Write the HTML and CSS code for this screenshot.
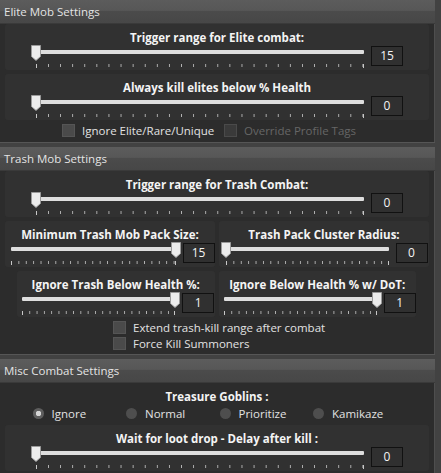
FILE: index.html
```html
<!DOCTYPE html>
<html lang="en">
<head>
    <meta charset="UTF-8">
    <title>Combat Settings</title>
    <link rel="stylesheet" href="styles.css">
</head>
<body>
    <div class="section">
        <div class="section-head">Elite Mob Settings</div>
        <div class="section-body">
            <div class="panel">
                <div class="label">Trigger range for Elite combat:</div>
                <div class="slider-row">
                    <div class="slider full">
                        <div class="track"></div>
                        <svg class="thumb" width="10" height="16"><path d="M0.5 0.5H9.5V11.5L5 15.5L0.5 11.5Z" fill="#ececec" stroke="#9a9a9a"/></svg>
                        <div class="ticks"></div>
                    </div>
                    <div class="value">15</div>
                </div>
            </div>
            <div class="panel">
                <div class="label">Always kill elites below % Health</div>
                <div class="slider-row">
                    <div class="slider full">
                        <div class="track"></div>
                        <svg class="thumb" width="10" height="16"><path d="M0.5 0.5H9.5V11.5L5 15.5L0.5 11.5Z" fill="#ececec" stroke="#9a9a9a"/></svg>
                        <div class="ticks"></div>
                    </div>
                    <div class="value">0</div>
                </div>
            </div>
            <div class="check-row">
                <label class="check"><span class="box"></span>Ignore Elite/Rare/Unique</label>
                <label class="check disabled"><span class="box"></span>Override Profile Tags</label>
            </div>
        </div>
    </div>

    <div class="section">
        <div class="section-head">Trash Mob Settings</div>
        <div class="section-body">
            <div class="panel">
                <div class="label">Trigger range for Trash Combat:</div>
                <div class="slider-row">
                    <div class="slider full">
                        <div class="track"></div>
                        <svg class="thumb" width="10" height="16"><path d="M0.5 0.5H9.5V11.5L5 15.5L0.5 11.5Z" fill="#ececec" stroke="#9a9a9a"/></svg>
                        <div class="ticks"></div>
                    </div>
                    <div class="value">0</div>
                </div>
            </div>
            <div class="pair">
                <div class="panel">
                    <div class="label">Minimum Trash Mob Pack Size:</div>
                    <div class="slider-row">
                        <div class="slider half">
                            <div class="track"></div>
                            <svg class="thumb max" width="10" height="16"><path d="M0.5 0.5H9.5V11.5L5 15.5L0.5 11.5Z" fill="#ececec" stroke="#9a9a9a"/></svg>
                            <div class="ticks"></div>
                        </div>
                        <div class="value">15</div>
                    </div>
                </div>
                <div class="panel">
                    <div class="label">Trash Pack Cluster Radius:</div>
                    <div class="slider-row">
                        <div class="slider half-r">
                            <div class="track"></div>
                            <svg class="thumb" width="10" height="16"><path d="M0.5 0.5H9.5V11.5L5 15.5L0.5 11.5Z" fill="#ececec" stroke="#9a9a9a"/></svg>
                            <div class="ticks"></div>
                        </div>
                        <div class="value">0</div>
                    </div>
                </div>
            </div>
            <div class="pair inset">
                <div class="panel">
                    <div class="label">Ignore Trash Below Health %:</div>
                    <div class="slider-row">
                        <div class="slider short">
                            <div class="track"></div>
                            <svg class="thumb max" width="10" height="16"><path d="M0.5 0.5H9.5V11.5L5 15.5L0.5 11.5Z" fill="#ececec" stroke="#9a9a9a"/></svg>
                            <div class="ticks"></div>
                        </div>
                        <div class="value">1</div>
                    </div>
                </div>
                <div class="panel">
                    <div class="label">Ignore Below Health % w/ DoT:</div>
                    <div class="slider-row">
                        <div class="slider short">
                            <div class="track"></div>
                            <svg class="thumb max" width="10" height="16"><path d="M0.5 0.5H9.5V11.5L5 15.5L0.5 11.5Z" fill="#ececec" stroke="#9a9a9a"/></svg>
                            <div class="ticks"></div>
                        </div>
                        <div class="value">1</div>
                    </div>
                </div>
            </div>
            <div class="check-list">
                <label class="check"><span class="box"></span>Extend trash-kill range after combat</label>
                <label class="check"><span class="box"></span>Force Kill Summoners</label>
            </div>
        </div>
    </div>

    <div class="section">
        <div class="section-head">Misc Combat Settings</div>
        <div class="section-body">
            <div class="label goblins">Treasure Goblins :</div>
            <div class="radio-row">
                <label class="radio checked"><span class="dot"></span>Ignore</label>
                <label class="radio"><span class="dot"></span>Normal</label>
                <label class="radio"><span class="dot"></span>Prioritize</label>
                <label class="radio"><span class="dot"></span>Kamikaze</label>
            </div>
            <div class="panel">
                <div class="label">Wait for loot drop - Delay after kill :</div>
                <div class="slider-row">
                    <div class="slider full">
                        <div class="track"></div>
                        <svg class="thumb" width="10" height="16"><path d="M0.5 0.5H9.5V11.5L5 15.5L0.5 11.5Z" fill="#ececec" stroke="#9a9a9a"/></svg>
                        <div class="ticks"></div>
                    </div>
                    <div class="value">0</div>
                </div>
            </div>
        </div>
    </div>
</body>
</html>
```

FILE: styles.css
```css
body {
    margin: 0;
    background: #424242;
    font-family: "Open Sans", "Noto Sans", sans-serif;
    font-size: 11.5px;
    color: #ececec;
    overflow: hidden;
}
.section {
    width: 435px;
    margin-bottom: 4px;
    border-bottom: 1px solid #565656;
}
.section-head {
    height: 23px;
    line-height: 23px;
    padding-left: 4px;
    font-size: 11.5px;
    color: #e4e4e4;
    background: linear-gradient(#5c5c5c 0%, #575757 45%, #4b4b4b 50%, #474747 100%);
    border-bottom: 1px solid #3a3a3a;
}
.section-body {
    background: #2c2c2c;
    padding: 0 5px 4px 5px;
    border-right: 1px solid #4e4e4e;
}
.panel {
    background: #313131;
    border-radius: 3px;
    padding: 6px 0 2px 0;
    margin-bottom: 4px;
}
.label {
    text-align: center;
    font-weight: bold;
    line-height: 15px;
    color: #f4f4f4;
}
.label.goblins {
    padding-top: 6px;
}
.slider-row {
    display: flex;
    justify-content: center;
    align-items: flex-start;
    gap: 2px;
}
.slider {
    position: relative;
    height: 23px;
}
.slider.full { width: 338px; }
.slider.half { width: 175px; }
.slider.half-r { width: 173px; }
.slider.short { width: 163px; }
.track {
    margin: 5px 5px 0 5px;
    height: 4px;
    background: #dedede;
    border-radius: 1px;
}
.thumb {
    position: absolute;
    top: 0;
    left: 0;
    display: block;
}
.thumb.max {
    left: auto;
    right: 0;
}
.ticks {
    margin: 10px 5px 0 5px;
    height: 4px;
    border-left: 1px solid #c8c8c8;
    border-right: 1px solid #c8c8c8;
    background-image: linear-gradient(to right, #b4b4b4 1px, transparent 1px);
    background-repeat: repeat-x;
    background-size: 12.1px 3px;
    background-position: 11px 0;
}
.half .ticks, .half-r .ticks { background-size: 7.4px 3px; background-position: 6.4px 0; }
.short .ticks { background-size: 7.3px 3px; background-position: 6.3px 0; }
.value {
    width: 30px;
    height: 18px;
    margin-top: 1px;
    border: 1px solid #111;
    background: #303030;
    text-align: center;
    line-height: 18px;
    font-size: 12px;
    color: #f4f4f4;
}
.pair {
    display: grid;
    grid-template-columns: 1fr 1fr;
    gap: 4px;
}
.pair.inset {
    margin: 0 13px 0 12px;
}
.check-row {
    display: flex;
    padding-left: 57px;
    height: 16px;
    margin-top: -2px;
    align-items: center;
}
.check {
    display: flex;
    align-items: center;
    gap: 7px;
    width: 162px;
    font-size: 11.5px;
    color: #e2e2e2;
}
.check .box {
    width: 11px;
    height: 11px;
    background: #4a4a4a;
    border: 1px solid #555;
}
.check.disabled { color: #666; }
.check.disabled .box {
    background: #3a3a3a;
    border-color: #4a4a4a;
}
.check-list {
    padding-left: 108px;
    margin: -2px 0 -1px 0;
}
.check-list .check {
    width: auto;
    height: 16px;
}
.radio-row {
    display: grid;
    grid-template-columns: repeat(4, 93.5px);
    justify-content: center;
    padding-left: 5px;
    height: 18px;
    align-items: center;
    margin-bottom: 3px;
}
.radio {
    display: flex;
    align-items: center;
    gap: 8px;
    color: #e2e2e2;
    font-size: 11.5px;
}
.radio .dot {
    width: 11px;
    height: 11px;
    border-radius: 50%;
    background: #4e4e4e;
}
.radio.checked .dot {
    background: radial-gradient(circle, #d4d4d4 0 2.5px, #5e5e5e 3px);
}
```
